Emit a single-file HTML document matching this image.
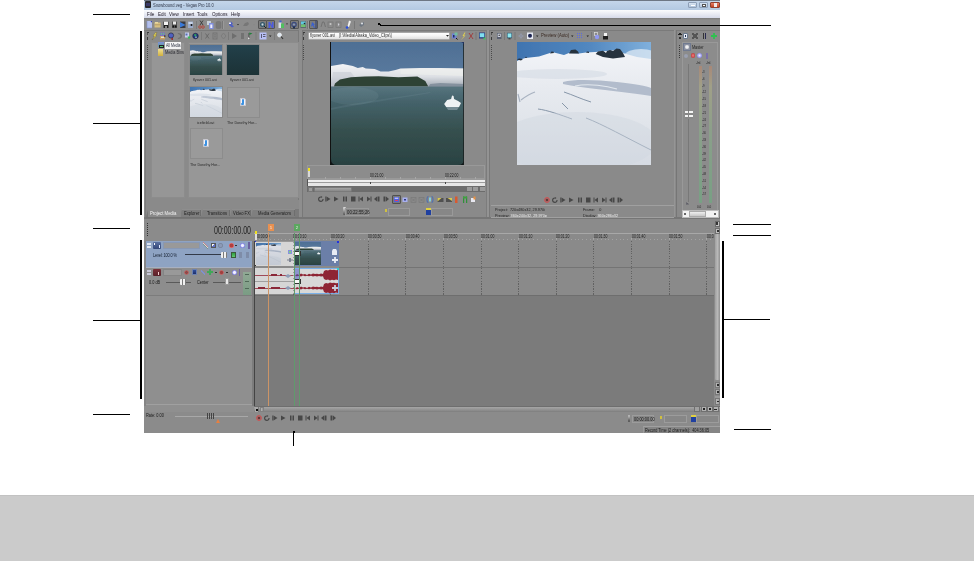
<!DOCTYPE html>
<html><head><meta charset="utf-8">
<style>
*{margin:0;padding:0;box-sizing:border-box}
html,body{width:974px;height:561px;overflow:hidden;background:#fff;font-family:"Liberation Sans",sans-serif}
.a{position:absolute}
#root{position:relative;width:974px;height:561px;background:#fff;overflow:hidden}
.ln{position:absolute;background:#000}
.t{position:absolute;white-space:nowrap;font-size:6px;line-height:7px;color:#222;transform:scaleX(0.86);transform-origin:0 0}
svg{display:block}
</style></head><body><div id="root">

<div class="a" style="left:0px;top:495px;width:974px;height:66px;background:#cbcbcb;"></div>
<div class="a" style="left:0px;top:495px;width:974px;height:1px;background:#c2c2c2;"></div>
<div class="a" style="left:144px;top:0px;width:576px;height:433px;background:#8a8a8a;"></div>
<div class="a" style="left:144px;top:0px;width:576px;height:1px;background:#6d7784;"></div>
<div class="a" style="left:144px;top:1px;width:576px;height:9px;background:linear-gradient(#c4d6ea,#b3c9e2);"></div>
<div class="a" style="left:145px;top:1px;width:6px;height:7px;background:#2a2a30;border-radius:1px"></div>
<div class="a" style="left:146px;top:3px;width:4px;height:3px;background:#3a3a6a;"></div>
<div class="t" style="left:153px;top:1px;font-size:5.5px;line-height:8px;color:#30384a;transform:scaleX(0.74);transform-origin:0 0">Snowbound.veg - Vegas Pro 10.0</div>
<div class="a" style="left:688px;top:2px;width:9px;height:6px;background:linear-gradient(#d8e4f2,#b0c4dc);border:1px solid #8ea0b8;border-radius:1px"></div>
<div class="a" style="left:691px;top:5px;width:4px;height:1px;background:#fff;"></div>
<div class="a" style="left:699px;top:2px;width:9px;height:6px;background:linear-gradient(#d8e4f2,#b0c4dc);border:1px solid #8ea0b8;border-radius:1px"></div>
<div class="a" style="left:702px;top:4px;width:4px;height:3px;background:#fff;border:1px solid #555"></div>
<div class="a" style="left:710px;top:2px;width:10px;height:6px;background:linear-gradient(#e8806a,#c04020);border:1px solid #904030;border-radius:1px"></div>
<div class="a" style="left:714px;top:3px;width:3px;height:4px;background:#f0e8e8;"></div>
<div class="a" style="left:144px;top:10px;width:576px;height:8px;background:linear-gradient(#fbfcfe,#f0f2f8 30%,#d6daea);"></div>
<div class="t" style="left:147px;top:11px;font-size:5.8px;line-height:7px;color:#1c1624;transform:scaleX(0.78);transform-origin:0 0">File</div>
<div class="t" style="left:158px;top:11px;font-size:5.8px;line-height:7px;color:#1c1624;transform:scaleX(0.78);transform-origin:0 0">Edit</div>
<div class="t" style="left:169px;top:11px;font-size:5.8px;line-height:7px;color:#1c1624;transform:scaleX(0.78);transform-origin:0 0">View</div>
<div class="t" style="left:183px;top:11px;font-size:5.8px;line-height:7px;color:#1c1624;transform:scaleX(0.78);transform-origin:0 0">Insert</div>
<div class="t" style="left:197px;top:11px;font-size:5.8px;line-height:7px;color:#1c1624;transform:scaleX(0.78);transform-origin:0 0">Tools</div>
<div class="t" style="left:212px;top:11px;font-size:5.8px;line-height:7px;color:#1c1624;transform:scaleX(0.78);transform-origin:0 0">Options</div>
<div class="t" style="left:231px;top:11px;font-size:5.8px;line-height:7px;color:#1c1624;transform:scaleX(0.78);transform-origin:0 0">Help</div>
<div class="a" style="left:144px;top:18px;width:576px;height:13px;background:linear-gradient(#7a7a7a,#8c8c8c 15%,#8c8c8c);"></div>
<svg class="a" style="left:146px;top:20px" width="50" height="9" viewBox="0 0 50 9">
<path d="M1 1 L4.5 1 L6 2.5 L6 8 L1 8Z" fill="#b4c0ec"/><path d="M4.5 1 L6 1 L6 2.5Z" fill="#3040c0"/><path d="M1 1 L1 8 L6 8" stroke="#8090d0" stroke-width="0.6" fill="none"/>
<rect x="8.5" y="2.5" width="6" height="5" fill="#d8c080"/><rect x="9" y="2" width="3" height="1.5" fill="#e8d8a0"/><rect x="8.5" y="4.5" width="6" height="0.7" fill="#a89060"/>
<rect x="17.5" y="1.5" width="5" height="6.5" rx="0.5" fill="#202020"/><rect x="18" y="1.5" width="4" height="3.5" fill="#f4f4f4"/><rect x="19.5" y="6" width="1" height="2" fill="#eee"/>
<rect x="26" y="1.5" width="5" height="6.5" rx="0.5" fill="#505050"/><rect x="27" y="1.5" width="3" height="3" fill="#e8e8e8"/><rect x="26.5" y="5.5" width="1.5" height="2" fill="#111"/><rect x="29" y="5.5" width="1.5" height="2" fill="#111"/>
<rect x="34" y="1.5" width="5.5" height="6.5" fill="#3a3a40"/><path d="M34 2 L39.5 5 L34 7.5Z" fill="#3a7ad8"/>
<rect x="42" y="1.5" width="5" height="6.5" fill="#9aaac8"/><rect x="42.5" y="2" width="4" height="2" fill="#c8d4e8"/><circle cx="45.5" cy="5" r="1" fill="#111"/>
</svg>
<div class="a" style="left:196px;top:21px;width:1px;height:8px;background:#7a7a7a;"></div>
<svg class="a" style="left:197px;top:19px" width="80" height="11" viewBox="0 0 80 11">
<path d="M3 1.5 L6 6 M6 1.5 L3 6" stroke="#3a3a3a" stroke-width="0.9"/><circle cx="3" cy="8" r="1.3" fill="none" stroke="#b04a40" stroke-width="1"/><circle cx="6" cy="8" r="1.3" fill="none" stroke="#b04a40" stroke-width="1"/>
<rect x="10" y="2" width="4" height="4" fill="#c8d0d8"/><rect x="12" y="4" width="4.5" height="6" fill="#8090e0"/><rect x="13.3" y="5.5" width="2" height="3.5" fill="#f0f0ff"/>
<rect x="19" y="2.5" width="5" height="7" rx="1.5" fill="#787878" stroke="#707070" stroke-width="0.5"/>
<rect x="26" y="2" width="1" height="8" fill="#9a9a9a"/><rect x="25" y="2" width="1" height="8" fill="#777"/>
<path d="M32 4 L34 2.5 L36 4.5 L35 5.5 L37 7.5 L35 8.5 L32 6Z" fill="#5060c0"/><rect x="32" y="3.5" width="2" height="1.5" fill="#e8e8f0"/>
<path d="M40 5 L42 5 L41 6.3Z" fill="#222"/>
<path d="M46 7 L48 4 L51 3 L52 5 L50 7Z" fill="#777"/>
<path d="M56 5 L58 5 L57 6.3Z" fill="#888"/>
</svg>
<div class="a" style="left:258px;top:20px;width:9px;height:9px;background:#7c7c7c;border:1px solid #555;border-radius:1px"></div>
<div class="a" style="left:266px;top:20px;width:9px;height:9px;background:#7c7c7c;border:1px solid #555;border-radius:1px"></div>
<svg class="a" style="left:259px;top:21px" width="16" height="8" viewBox="0 0 16 8">
<circle cx="3.5" cy="3.5" r="2" fill="none" stroke="#305a70" stroke-width="1.2"/><circle cx="3.5" cy="3.5" r="0.9" fill="#c0e0f0"/><path d="M5 5 L7 7" stroke="#222" stroke-width="1"/>
<path d="M9.5 1 L11 1 L13 4.5 L13 1 L14.5 1 L14.5 7 L13 7 L11 3.5 L11 7 L9.5 7Z" fill="#4a5ae0"/>
</svg>
<div class="a" style="left:290px;top:20px;width:9px;height:9px;background:#7c7c7c;border:1px solid #555;border-radius:1px"></div>
<div class="a" style="left:309px;top:20px;width:9px;height:9px;background:#7c7c7c;border:1px solid #555;border-radius:1px"></div>
<svg class="a" style="left:276px;top:19px" width="92" height="11" viewBox="0 0 92 11">
<rect x="3.5" y="1.5" width="2" height="2" fill="#4060d0"/><rect x="2.5" y="3.5" width="3" height="5.5" fill="#d8dce8"/><rect x="5" y="4.5" width="3" height="4.5" fill="#50c060"/>
<path d="M10 4.5 L12 4.5 L11 5.8Z" fill="#222"/>
<circle cx="18" cy="5.5" r="2.2" fill="none" stroke="#3a4a80" stroke-width="1.2"/><circle cx="18" cy="5.5" r="0.8" fill="#80a0e0"/><rect x="17" y="7.5" width="2" height="2" fill="#203050"/>
<rect x="24.5" y="2" width="5.5" height="7" fill="#5a6a70"/><rect x="25" y="2.5" width="4.5" height="3" fill="#60c8e0"/><rect x="25" y="5.5" width="4.5" height="2.5" fill="#70c070"/><circle cx="28.5" cy="4.5" r="0.8" fill="#222"/>
<rect x="31" y="2" width="1" height="8" fill="#777"/><rect x="32" y="2" width="1" height="8" fill="#9a9a9a"/>
<path d="M36 3 L39 5.5 L37.5 6 L39 8.5 L38 9 L36.5 6.5 L35 8Z" fill="#3a60d0"/><rect x="39.5" y="1.5" width="1" height="8" fill="#2a3a70"/>
<path d="M45 8 L46.5 3 L48 3 L49.5 8" stroke="#6e6e6e" stroke-width="0.9" fill="none"/>
<rect x="52" y="3" width="5" height="5.5" fill="none" stroke="#747474" stroke-width="0.7"/><circle cx="54.5" cy="5" r="1" fill="#c8c8c8"/>
<rect x="60" y="3" width="5" height="5.5" fill="none" stroke="#747474" stroke-width="0.7"/><path d="M62 4 L63.5 5.5 L62 7Z" fill="#d0d0d8"/>
<path d="M73 1.5 L75 2.5 L73 8 L71.5 7.5Z" fill="#f0f0f0"/><circle cx="71" cy="8.5" r="1.3" fill="#2a50e0"/>
<rect x="78" y="2" width="1" height="8" fill="#777"/>
<path d="M83 6 L86 4 L88 3 L88 6 L85 8Z" fill="#6e7680"/><circle cx="86" cy="4.5" r="1" fill="#e0e4ea"/>
</svg>
<div class="a" style="left:144px;top:30px;width:576px;height:189px;background:#8a8a8a;"></div>
<div class="a" style="left:144px;top:30px;width:576px;height:1px;background:#7a7a7a;"></div>
<div class="a" style="left:145px;top:30px;width:1px;height:188px;background:#7c7c7c;"></div>
<div class="a" style="left:298px;top:30px;width:5px;height:189px;background:linear-gradient(90deg,#7a7a7a 0 1px,#8e8e8e 1px 4px,#787878 4px);"></div>
<div class="a" style="left:486px;top:30px;width:4px;height:189px;background:linear-gradient(90deg,#7c7c7c 0 1px,#939393 1px 3px,#787878 3px);"></div>
<div class="a" style="left:674px;top:30px;width:3px;height:189px;background:linear-gradient(90deg,#959595 0 1px,#8a8a8a 1px 2px,#767676 2px);"></div>
<div class="a" style="left:144px;top:217px;width:576px;height:2px;background:#767676;"></div>
<div class="a" style="left:147px;top:32px;width:2px;height:1px;background:#3a3a3a;"></div>
<div class="a" style="left:147px;top:33px;width:1px;height:2px;background:#555;"></div>
<div class="a" style="left:147px;top:37px;width:1px;height:3px;background:#3a3a3a;"></div>
<div class="a" style="left:147px;top:45px;width:1px;height:1px;background:#4a4a4a;"></div>
<div class="a" style="left:147px;top:47px;width:1px;height:1px;background:#4a4a4a;"></div>
<div class="a" style="left:147px;top:49px;width:1px;height:1px;background:#4a4a4a;"></div>
<div class="a" style="left:147px;top:51px;width:1px;height:1px;background:#4a4a4a;"></div>
<div class="a" style="left:147px;top:53px;width:1px;height:1px;background:#4a4a4a;"></div>
<div class="a" style="left:147px;top:55px;width:1px;height:1px;background:#4a4a4a;"></div>
<div class="a" style="left:147px;top:57px;width:1px;height:1px;background:#4a4a4a;"></div>
<div class="a" style="left:147px;top:59px;width:1px;height:1px;background:#4a4a4a;"></div>
<svg class="a" style="left:150px;top:31px" width="50" height="10" viewBox="0 0 50 10">
<path d="M5.5 1.5 L3 5 L4.5 5 L2 9 L7 4.3 L5.5 4.3 L7 1.5Z" fill="#e8d850" stroke="#6a6040" stroke-width="0.4"/>
<rect x="10" y="1.5" width="5" height="3.5" fill="#7a70c0"/><rect x="10.8" y="2.3" width="1.2" height="1.2" fill="#60e070"/><rect x="13" y="2.3" width="1.2" height="1.2" fill="#60e070"/><rect x="10" y="5" width="5" height="3.5" fill="#c8a060"/><rect x="11" y="5.7" width="3" height="1.3" fill="#e0e0d0"/><rect x="14.2" y="4.5" width="1.2" height="1.2" fill="#111"/>
<circle cx="21" cy="4.5" r="2.6" fill="#5060c0" stroke="#2a2a40" stroke-width="0.7"/><rect x="21.5" y="7" width="1.3" height="2" fill="#a02020"/>
<path d="M27.5 2 Q32 2 32 5 Q32 8 27.5 8 L28.5 6.8 Q30.5 6.5 30.5 5 Q30.5 3.5 28.5 3.2Z" fill="#6e6e6e"/>
<rect x="35" y="1.5" width="4" height="5" fill="#c8d0f0"/><rect x="35.5" y="2.5" width="2" height="2" fill="#5a70b0"/><path d="M37.5 5.5 L40.5 5.5 L39 8.5Z" fill="#30c050"/>
<circle cx="45.5" cy="5" r="2.8" fill="#203a80" stroke="#1a1a30" stroke-width="0.5"/><path d="M44 3.5 Q45 2.5 46.5 3.5 L46 5.5 L44.5 5Z" fill="#30a060"/><rect x="45.5" y="5.5" width="1" height="1.5" fill="#e0e8f0"/>
</svg>
<svg class="a" style="left:200px;top:31px" width="88" height="10" viewBox="0 0 88 10">
<rect x="1" y="1" width="1" height="8" fill="#7a7a7a"/>
<path d="M5.5 2.5 L9 7.5 M9 2.5 L5.5 7.5" stroke="#6a6a6a" stroke-width="1"/>
<rect x="13" y="2" width="4" height="6" fill="none" stroke="#707070" stroke-width="0.8"/><rect x="14" y="3.5" width="2" height="0.8" fill="#707070"/><rect x="14" y="5.5" width="2" height="0.8" fill="#707070"/>
<path d="M23.5 2 L26 5 L23.5 8 L21 5Z" fill="none" stroke="#7a7a7a" stroke-width="0.9"/>
<rect x="28" y="1" width="1" height="8" fill="#7a7a7a"/>
<path d="M32 2 L37 5 L32 8Z" fill="#6e6e6e"/>
<rect x="41" y="2" width="3" height="6" fill="#727272"/>
<rect x="48.5" y="2" width="0.8" height="7" fill="#444"/><path d="M49.3 1.5 L52.5 2.5 L49.3 4Z" fill="#20803a"/><path d="M48 6 L50 8 L48 8.5Z" fill="#e0e0e0"/>
<rect x="55.5" y="1" width="1" height="8" fill="#7a7a7a"/>
<rect x="59.5" y="1.5" width="7" height="7" fill="#b8c0f8"/><rect x="61" y="3" width="1" height="4" fill="#5a5a70"/><rect x="63" y="3" width="2.5" height="1" fill="#5a5a70"/><rect x="63" y="5" width="2.5" height="1" fill="#5a5a70"/>
<path d="M69 4.5 L71.5 4.5 L70.25 6Z" fill="#222"/>
<rect x="74" y="1" width="1" height="8" fill="#7a7a7a"/>
<circle cx="79.5" cy="4" r="2" fill="#dde8f4" stroke="#f4f4f4" stroke-width="0.7"/><path d="M81 5.5 L83 7.8" stroke="#333" stroke-width="1.1"/>
</svg>
<div class="a" style="left:151px;top:42px;width:34px;height:156px;background:#969696;border:1px solid #8c8c8c"></div>
<div class="a" style="left:158px;top:42px;width:6px;height:5px;background:linear-gradient(#8090d8,#60a0a0);"></div>
<div class="a" style="left:159px;top:45px;width:5px;height:3px;background:#50c070;border:1px solid #222"></div>
<div class="a" style="left:165px;top:42px;width:16px;height:7px;background:#f4f4f4;"></div>
<div class="t" style="left:166px;top:43px;font-size:4.8px;line-height:6px;color:#2a3040;transform:scaleX(0.74);transform-origin:0 0">All Media</div>
<div class="a" style="left:158px;top:49px;width:5px;height:7px;background:linear-gradient(#f0e090,#d0b040);"></div>
<div class="t" style="left:165px;top:50px;font-size:4.8px;line-height:6px;color:#2a2a30;transform:scaleX(0.8);transform-origin:0 0">Media Bins</div>
<div class="a" style="left:188px;top:42px;width:111px;height:156px;background:#979797;border:1px solid #8c8c8c"></div>
<div class="a" style="left:189px;top:44px;width:34px;height:31px;background:#888"></div>
<svg class="a" style="left:190px;top:45px" width="32" height="30" viewBox="0 0 32 30"><defs><linearGradient id="skyth1" x1="0" y1="0" x2="0" y2="1"><stop offset="0" stop-color="#4e6f94"/><stop offset="1" stop-color="#7896b8"/></linearGradient>
<linearGradient id="watth1" x1="0" y1="0" x2="0" y2="1"><stop offset="0" stop-color="#56747e"/><stop offset="0.2" stop-color="#44626a"/><stop offset="0.55" stop-color="#36504f"/><stop offset="1" stop-color="#2a4242"/></linearGradient>
<linearGradient id="mtth1" x1="0" y1="0" x2="0" y2="1"><stop offset="0" stop-color="#f4f4f6"/><stop offset="0.55" stop-color="#dcdfe4"/><stop offset="1" stop-color="#a0a8b2"/></linearGradient></defs>
<filter id="wbth1" x="0" y="0" width="1" height="1"><feGaussianBlur stdDeviation="0.35"/></filter>
<g transform="scale(0.23880597014925373,0.24390243902439024)" filter="url(#wbth1)">
<rect width="134" height="123" fill="url(#skyth1)"/>
<path d="M0 24 L12 22 L22 24 L27 26 L32 25 L35 26.5 L44 27 L50 29.5 L58 29.5 L65 28 L70 26.5 L90 26 L110 26 L134 26.5 L134 45 L0 45Z" fill="url(#mtth1)"/>
<path d="M70 27 L134 26.5 L134 34 L70 32Z" fill="#eef0ec" opacity="0.6"/>
<path d="M2 30 L20 30 L26 38 L8 44 L0 44Z" fill="#c8ccd4" opacity="0.6"/>
<path d="M3 44.6 L4 41.5 L9 37.4 L20 35.3 L34 34.6 L48 34.2 L68 35.3 L87 34.6 L95 39 L98 44.6Z" fill="#2e4236"/>
<path d="M98 45 L100 42 L110 41 L134 42 L134 45Z" fill="#7a8896" opacity="0.8"/>
<rect y="44.6" width="134" height="78.4" fill="url(#watth1)"/>
<ellipse cx="22" cy="54" rx="26" ry="9" fill="#90aab4" opacity="0.12"/>
<path d="M0 66 C30 60 60 56 100 50 L100 51 C60 58 30 62 0 68Z" fill="#88a4ae" opacity="0.15"/>
<path d="M114 62 L117 58 L121 57 L122 53.5 L123.5 54 L124 57 L128 59 L131 61 L129 65 L116 65Z" fill="#eef2f4"/>
<path d="M116 65 L129 65 L127 68 L118 68Z" fill="#8aa0a8" opacity="0.7"/>
</g></svg>
<div class="a" style="left:226px;top:44px;width:34px;height:31px;background:#888"></div>
<div class="a" style="left:227px;top:45px;width:32px;height:30px;background:linear-gradient(#22404a,#1c3236)"></div>
<div class="a" style="left:189px;top:86px;width:34px;height:32px;background:#888"></div>
<svg class="a" style="left:190px;top:87px" width="32" height="30" viewBox="0 0 32 30"><defs><linearGradient id="sskyth3" x1="0" y1="0" x2="1" y2="0"><stop offset="0" stop-color="#4074b0"/><stop offset="0.55" stop-color="#5288c0"/><stop offset="1" stop-color="#80b0dc"/></linearGradient>
<linearGradient id="snowth3" x1="0" y1="0" x2="0" y2="1"><stop offset="0" stop-color="#f2f4f8"/><stop offset="0.3" stop-color="#e8ebf0"/><stop offset="0.65" stop-color="#e0e4ea"/><stop offset="1" stop-color="#d6dbe3"/></linearGradient></defs>
<filter id="sbth3" x="0" y="0" width="1" height="1"><feGaussianBlur stdDeviation="0.45"/></filter>
<g transform="scale(0.23880597014925373,0.24390243902439024)" filter="url(#sbth3)">
<rect width="134" height="123" fill="url(#sskyth3)"/>
<ellipse cx="124" cy="13" rx="16" ry="6" fill="#e8f0f6" opacity="0.7"/>
<path d="M0 19 L3 17.4 L8.5 16 L22 14.5 L33 11 L36 10.2 L47 13 L52 11 L62 11.5 L69 10.5 L78 10 L90 9 L99 8 L106 11 L111 12.5 L120 15 L134 17 L134 123 L0 123Z" fill="url(#snowth3)"/>
<path d="M0 17.5 L2 16.5 L6 17 L4 18.5Z M8 16 L9 14.6 L10 16Z M33 11.5 L34.5 9.5 L36.5 9.8 L37 11Z M52 11.5 L54 8 L58.5 7.5 L61 9.5 L62 11.5Z M69 10.5 L70 9.5 L72 9.8 L72 11Z M78.7 12 L81 9.5 L86 8.8 L89 11 L90 9 L93 8 L96 9 L99.5 6.6 L103 7 L106 11 L108 15 L96 16.5 L86 15Z" fill="#27313c"/>
<ellipse cx="40" cy="32" rx="50" ry="5" fill="#d0d8e2" opacity="0.5"/>
<path d="M46 40 C58 37 80 38 100 40 C118 42 130 44 134 46 L134 54 C122 52 104 50 88 48 C70 46 55 44 46 42Z" fill="#b2bccc"/>
<path d="M58 44 C72 41 90 44 100 47" stroke="#eef2f6" stroke-width="1.2" fill="none" opacity="0.8"/>
<path d="M1 52 L3 60 M4 58 C8 55 12 52 18 50" stroke="#a8b2c0" stroke-width="1.2" fill="none"/>
<path d="M21 67 C30 68 44 73 55 77 M45 61 C47 63 49 65 51 67 M69 76 C85 82 110 96 134 108 M47 50 C56 53 64 57 74 60" stroke="#7c8ca0" stroke-width="0.9" fill="none"/>
<ellipse cx="60" cy="100" rx="80" ry="30" fill="#d0d6e0" opacity="0.45"/>
</g></svg>
<div class="a" style="left:227px;top:87px;width:33px;height:31px;background:#9a9a9a;border:1px solid #8c8c8c"></div>
<div class="a" style="left:190px;top:128px;width:33px;height:31px;background:#9a9a9a;border:1px solid #8c8c8c"></div>
<div class="a" style="left:240px;top:98px;width:6px;height:8px;background:#f4f4f8;border:1px solid #c8c8d0;border-radius:0 2px 0 0"></div><div class="a" style="left:242px;top:99px;width:2px;height:5px;background:#3a90e0;border-radius:1px"></div><div class="a" style="left:241px;top:103px;width:3px;height:2px;background:#3a90e0;border-radius:1px"></div>
<div class="a" style="left:203px;top:139px;width:6px;height:8px;background:#f4f4f8;border:1px solid #c8c8d0;border-radius:0 2px 0 0"></div><div class="a" style="left:205px;top:140px;width:2px;height:5px;background:#3a90e0;border-radius:1px"></div><div class="a" style="left:204px;top:144px;width:3px;height:2px;background:#3a90e0;border-radius:1px"></div>
<div class="t" style="left:193px;top:77px;font-size:4.3px;line-height:6px;color:#2a2a2a">flyover 001.avi</div>
<div class="t" style="left:230px;top:77px;font-size:4.3px;line-height:6px;color:#2a2a2a">flyover 001.avi</div>
<div class="t" style="left:197px;top:120px;font-size:4.3px;line-height:6px;color:#2a2a2a">icefield.avi</div>
<div class="t" style="left:227px;top:120px;font-size:4.3px;line-height:6px;color:#2a2a2a">The Dorothy Hor...</div>
<div class="t" style="left:190px;top:162px;font-size:4.3px;line-height:6px;color:#2a2a2a">The Dorothy Hor...</div>
<div class="a" style="left:146px;top:200px;width:153px;height:17px;background:#8a8a8a;"></div>
<div class="a" style="left:146px;top:216px;width:153px;height:2px;background:#727272;"></div>
<div class="a" style="left:295px;top:209px;width:4px;height:8px;background:#7a7a7a;"></div>
<div class="a" style="left:180px;top:209px;width:21px;height:8px;background:#7f7f7f;clip-path:polygon(2px 0,100% 0,100% 100%,0 100%);border-top:1px solid #8e8e8e"></div>
<div class="a" style="left:200px;top:210px;width:1px;height:6px;background:#6e6e6e;"></div>
<div class="a" style="left:201px;top:209px;width:29px;height:8px;background:#7f7f7f;clip-path:polygon(2px 0,100% 0,100% 100%,0 100%);border-top:1px solid #8e8e8e"></div>
<div class="a" style="left:229px;top:210px;width:1px;height:6px;background:#6e6e6e;"></div>
<div class="a" style="left:230px;top:209px;width:21px;height:8px;background:#7f7f7f;clip-path:polygon(2px 0,100% 0,100% 100%,0 100%);border-top:1px solid #8e8e8e"></div>
<div class="a" style="left:250px;top:210px;width:1px;height:6px;background:#6e6e6e;"></div>
<div class="a" style="left:251px;top:209px;width:44px;height:8px;background:#7f7f7f;clip-path:polygon(2px 0,100% 0,100% 100%,0 100%);border-top:1px solid #8e8e8e"></div>
<div class="a" style="left:294px;top:210px;width:1px;height:6px;background:#6e6e6e;"></div>
<div class="a" style="left:146px;top:209px;width:35px;height:8px;background:#8a8a8a;clip-path:polygon(3px 0,100% 0,100% 100%,0 100%)"></div>
<div class="a" style="left:146px;top:210px;width:2px;height:7px;background:#767676;clip-path:polygon(100% 0,100% 100%,0 100%)"></div>
<div class="t" style="left:150px;top:210px;font-size:5px;line-height:7px;color:#f4f4f4;">Project Media</div>
<div class="t" style="left:184px;top:210px;font-size:4.8px;line-height:7px;color:#1e1e1e;">Explorer</div>
<div class="t" style="left:207px;top:210px;font-size:4.8px;line-height:7px;color:#1e1e1e;">Transitions</div>
<div class="t" style="left:233px;top:210px;font-size:4.8px;line-height:7px;color:#1e1e1e;">Video FX</div>
<div class="t" style="left:258px;top:210px;font-size:4.8px;line-height:7px;color:#1e1e1e;">Media Generators</div>
<div class="a" style="left:303px;top:32px;width:2px;height:1px;background:#3a3a3a;"></div>
<div class="a" style="left:303px;top:33px;width:1px;height:2px;background:#555;"></div>
<div class="a" style="left:303px;top:37px;width:1px;height:3px;background:#3a3a3a;"></div>
<div class="a" style="left:303px;top:45px;width:1px;height:1px;background:#4a4a4a;"></div>
<div class="a" style="left:303px;top:47px;width:1px;height:1px;background:#4a4a4a;"></div>
<div class="a" style="left:303px;top:49px;width:1px;height:1px;background:#4a4a4a;"></div>
<div class="a" style="left:303px;top:51px;width:1px;height:1px;background:#4a4a4a;"></div>
<div class="a" style="left:303px;top:53px;width:1px;height:1px;background:#4a4a4a;"></div>
<div class="a" style="left:303px;top:55px;width:1px;height:1px;background:#4a4a4a;"></div>
<div class="a" style="left:303px;top:57px;width:1px;height:1px;background:#4a4a4a;"></div>
<div class="a" style="left:303px;top:59px;width:1px;height:1px;background:#4a4a4a;"></div>
<div class="a" style="left:308px;top:32px;width:142px;height:8px;background:linear-gradient(#ffffff,#f4f4f4 50%,#e0e0e0);border:1px solid #a8a8a8;border-radius:1px"></div>
<div class="t" style="left:310px;top:32px;font-size:4.5px;line-height:7px;color:#2a2a2a;">flyover 001.avi &nbsp;&nbsp;&nbsp;[I:\Media\Alaska_Video_Clips\]</div>
<svg class="a" style="left:444px;top:31px" width="44" height="10" viewBox="0 0 44 10">
<path d="M2 4 L5 4 L3.5 5.8Z" fill="#222"/>
<rect x="8" y="2.5" width="4.5" height="5" fill="#7080d8"/><rect x="10.5" y="1.5" width="3" height="3" fill="#70c0a0"/><rect x="9" y="4" width="1.5" height="2.5" fill="#20305a"/><path d="M12 7 L13.5 8.5" stroke="#111" stroke-width="1"/>
<path d="M20.5 1.5 L18.5 5 L20 5 L17 9 L21.5 4.5 L20 4.5 L21.5 1.5Z" fill="#e0d050"/>
<path d="M25 2 L29 8 M29 2 L25 8" stroke="#a03838" stroke-width="0.9"/>
<rect x="31.5" y="1" width="1" height="8" fill="#777"/>
<rect x="35" y="1.5" width="6" height="6" fill="#2a3a80"/><rect x="35.7" y="2.2" width="4.6" height="4" fill="#80e0f0"/><rect x="39.5" y="6.5" width="2" height="2" fill="#40c060"/>
</svg>
<div class="a" style="left:330px;top:42px;width:1px;height:123px;background:#111"></div>
<svg class="a" style="left:331px;top:42px" width="133" height="123" viewBox="0 0 133 123"><defs><linearGradient id="skyt" x1="0" y1="0" x2="0" y2="1"><stop offset="0" stop-color="#4e6f94"/><stop offset="1" stop-color="#7896b8"/></linearGradient>
<linearGradient id="watt" x1="0" y1="0" x2="0" y2="1"><stop offset="0" stop-color="#56747e"/><stop offset="0.2" stop-color="#44626a"/><stop offset="0.55" stop-color="#36504f"/><stop offset="1" stop-color="#2a4242"/></linearGradient>
<linearGradient id="mtt" x1="0" y1="0" x2="0" y2="1"><stop offset="0" stop-color="#f4f4f6"/><stop offset="0.55" stop-color="#dcdfe4"/><stop offset="1" stop-color="#a0a8b2"/></linearGradient></defs>
<filter id="wbt" x="0" y="0" width="1" height="1"><feGaussianBlur stdDeviation="0.35"/></filter>
<g transform="scale(0.9925373134328358,1.0)" filter="url(#wbt)">
<rect width="134" height="123" fill="url(#skyt)"/>
<path d="M0 24 L12 22 L22 24 L27 26 L32 25 L35 26.5 L44 27 L50 29.5 L58 29.5 L65 28 L70 26.5 L90 26 L110 26 L134 26.5 L134 45 L0 45Z" fill="url(#mtt)"/>
<path d="M70 27 L134 26.5 L134 34 L70 32Z" fill="#eef0ec" opacity="0.6"/>
<path d="M2 30 L20 30 L26 38 L8 44 L0 44Z" fill="#c8ccd4" opacity="0.6"/>
<path d="M3 44.6 L4 41.5 L9 37.4 L20 35.3 L34 34.6 L48 34.2 L68 35.3 L87 34.6 L95 39 L98 44.6Z" fill="#2e4236"/>
<path d="M98 45 L100 42 L110 41 L134 42 L134 45Z" fill="#7a8896" opacity="0.8"/>
<rect y="44.6" width="134" height="78.4" fill="url(#watt)"/>
<ellipse cx="22" cy="54" rx="26" ry="9" fill="#90aab4" opacity="0.12"/>
<path d="M0 66 C30 60 60 56 100 50 L100 51 C60 58 30 62 0 68Z" fill="#88a4ae" opacity="0.15"/>
<path d="M114 62 L117 58 L121 57 L122 53.5 L123.5 54 L124 57 L128 59 L131 61 L129 65 L116 65Z" fill="#eef2f4"/>
<path d="M116 65 L129 65 L127 68 L118 68Z" fill="#8aa0a8" opacity="0.7"/>
<path d="M0 117 Q0 123 6 123 L0 123Z M134 117 Q134 123 128 123 L134 123Z" fill="#101418"/><rect x="133" width="1" height="123" fill="#1a2020" opacity="0.8"/><path d="M134 0 L130 0 Q134 0 134 4Z" fill="#203060"/></g></svg>
<div class="a" style="left:307px;top:165px;width:178px;height:14px;background:#8c8c8c;border:1px solid #999"></div>
<div class="a" style="left:308px;top:168px;width:2px;height:3px;background:#f0e020;"></div>
<div class="a" style="left:308px;top:171px;width:2px;height:6px;background:#d8d8d8;"></div>
<div class="t" style="left:370px;top:173px;font-size:4.6px;line-height:5px;color:#222;transform:scaleX(0.75);transform-origin:0 0">00:21:00</div>
<div class="t" style="left:445px;top:173px;font-size:4.6px;line-height:5px;color:#222;transform:scaleX(0.75);transform-origin:0 0">00:22:00</div>
<div class="a" style="left:325px;top:177px;width:1px;height:2px;background:#a8a8a8;"></div>
<div class="a" style="left:340px;top:177px;width:1px;height:2px;background:#a8a8a8;"></div>
<div class="a" style="left:355px;top:177px;width:1px;height:2px;background:#a8a8a8;"></div>
<div class="a" style="left:370px;top:177px;width:1px;height:2px;background:#a8a8a8;"></div>
<div class="a" style="left:385px;top:177px;width:1px;height:2px;background:#a8a8a8;"></div>
<div class="a" style="left:400px;top:177px;width:1px;height:2px;background:#a8a8a8;"></div>
<div class="a" style="left:415px;top:177px;width:1px;height:2px;background:#a8a8a8;"></div>
<div class="a" style="left:430px;top:177px;width:1px;height:2px;background:#a8a8a8;"></div>
<div class="a" style="left:445px;top:177px;width:1px;height:2px;background:#a8a8a8;"></div>
<div class="a" style="left:460px;top:177px;width:1px;height:2px;background:#a8a8a8;"></div>
<div class="a" style="left:475px;top:177px;width:1px;height:2px;background:#a8a8a8;"></div>
<div class="a" style="left:307px;top:179px;width:178px;height:7px;background:linear-gradient(#9a9a9a 0 0.5px,#eeeeee 0.5px 3px,#9c9c9c 3px 4px,#e6e6e6 4px 6.5px,#9a9a9a 6.5px);border-left:1px solid #555"></div>
<div class="a" style="left:370px;top:182px;width:1px;height:2px;background:#444;"></div>
<div class="a" style="left:445px;top:182px;width:1px;height:2px;background:#444;"></div>
<div class="a" style="left:307px;top:186px;width:178px;height:6px;background:#6c6c6c;"></div>
<div class="a" style="left:308px;top:187px;width:5px;height:5px;background:#9a9a9a;border:1px solid #777"></div>
<div class="a" style="left:314px;top:187px;width:38px;height:5px;background:linear-gradient(#a4a4a4,#888);border:1px solid #7a7a7a;border-radius:1px"></div>
<div class="a" style="left:467px;top:187px;width:5px;height:4px;background:#9a9a9a;"></div>
<div class="a" style="left:473px;top:187px;width:5px;height:4px;background:#9a9a9a;"></div>
<div class="a" style="left:480px;top:187px;width:5px;height:4px;background:#9a9a9a;"></div>
<svg class="a" style="left:318px;top:196px" width="6" height="6" viewBox="0 0 6 6"><path d="M3 1 A2.2 2.2 0 1 0 5 3" stroke="#474747" stroke-width="1.2" fill="none"/><path d="M3 0 L4.5 1 L3 2Z" fill="#474747"/></svg>
<svg class="a" style="left:325px;top:196px" width="6" height="6" viewBox="0 0 6 6"><rect x="0.3" y="0.5" width="1" height="5" fill="#474747"/><path d="M1.5 0.5 L5.5 3 L1.5 5.5Z" fill="#474747"/></svg>
<svg class="a" style="left:333px;top:196px" width="6" height="6" viewBox="0 0 6 6"><path d="M1 0.5 L5.5 3 L1 5.5Z" fill="#474747"/></svg>
<svg class="a" style="left:342px;top:196px" width="6" height="6" viewBox="0 0 6 6"><rect x="1" y="0.5" width="1.5" height="5" fill="#474747"/><rect x="3.5" y="0.5" width="1.5" height="5" fill="#474747"/></svg>
<svg class="a" style="left:350px;top:196px" width="6" height="6" viewBox="0 0 6 6"><rect x="1" y="0.5" width="4.5" height="5" fill="#474747"/></svg>
<svg class="a" style="left:358px;top:196px" width="6" height="6" viewBox="0 0 6 6"><rect x="0.5" y="0.5" width="1" height="5" fill="#474747"/><path d="M5 0.5 L1.5 3 L5 5.5Z" fill="#474747"/></svg>
<svg class="a" style="left:366px;top:196px" width="6" height="6" viewBox="0 0 6 6"><path d="M1 0.5 L4.5 3 L1 5.5Z" fill="#474747"/><rect x="4.5" y="0.5" width="1" height="5" fill="#474747"/></svg>
<svg class="a" style="left:374px;top:196px" width="6" height="6" viewBox="0 0 6 6"><path d="M3 0.5 L0 3 L3 5.5Z" fill="#474747"/><rect x="3.5" y="0.5" width="2" height="5" fill="#474747"/></svg>
<svg class="a" style="left:383px;top:196px" width="6" height="6" viewBox="0 0 6 6"><rect x="0.5" y="0.5" width="2" height="5" fill="#474747"/><path d="M3 0.5 L6 3 L3 5.5Z" fill="#474747"/></svg>
<div class="a" style="left:392px;top:195px;width:9px;height:9px;background:#7a7a7a;border:1px solid #505050;border-radius:1px"></div>
<svg class="a" style="left:392px;top:195px" width="86" height="9" viewBox="0 0 86 9">
<rect x="2" y="2" width="5" height="5" fill="#5060e0"/><rect x="2.7" y="2.7" width="3.6" height="1" fill="#e8e8ff"/><rect x="3" y="5" width="3" height="1" fill="#e04060"/>
<rect x="10.5" y="2.5" width="5" height="4.5" fill="#a8b0f0"/><rect x="12" y="4" width="2" height="1.5" fill="#303a80"/>
<rect x="19" y="2.5" width="5" height="5" fill="none" stroke="#7a7a7a" stroke-width="0.7"/><path d="M20 3.5 L23 6.5 M23 3.5 L20 6.5" stroke="#747474" stroke-width="0.6"/>
<rect x="27" y="2.5" width="5" height="5" fill="none" stroke="#7a7a7a" stroke-width="0.7"/><path d="M28 3.5 L31 6.5 M31 3.5 L28 6.5" stroke="#747474" stroke-width="0.6"/>
<path d="M36.5 1.5 Q35 1.5 35 4.5 Q35 7.5 36.5 7.5 M39.5 1.5 Q41 1.5 41 4.5 Q41 7.5 39.5 7.5" stroke="#5070b0" stroke-width="1.1" fill="none"/><rect x="37" y="2.5" width="2" height="4" fill="#80d0e0"/>
<path d="M45.5 3 L51.5 3 L51.5 7 L45.5 7Z" fill="#505050"/><path d="M45.5 3 L49.5 3 L45.5 6.5Z" fill="#d8c850"/>
<path d="M54 3 L60 3 L60 7 L54 7Z" fill="#505050"/><path d="M55.5 3 L60 3 L60 6Z" fill="#d8c850"/>
<rect x="63" y="1.5" width="2.5" height="6.5" fill="#d85a30"/>
<rect x="71" y="1.5" width="1.2" height="6.5" fill="#30903a"/><rect x="74" y="1.5" width="1.2" height="6.5" fill="#30903a"/><rect x="71" y="1.5" width="4" height="2" fill="#40a040"/>
<rect x="79" y="3" width="4" height="4" fill="#e8e8f0"/><rect x="81.5" y="1.5" width="2" height="3" fill="#e89040"/>
</svg>
<div class="a" style="left:343px;top:207px;width:3px;height:8px;background:linear-gradient(#ddd,#555);border-radius:1px"></div>
<div class="a" style="left:345px;top:208px;width:24px;height:8px;background:#858585;border:1px solid #9a9a9a"></div>
<div class="t" style="left:347px;top:209px;font-size:5px;line-height:7px;color:#1a1a1a;">00:22:55;26</div>
<div class="a" style="left:385px;top:209px;width:2px;height:3px;background:#d0c040;"></div>
<div class="a" style="left:388px;top:208px;width:22px;height:8px;background:#878787;border:1px solid #9a9a9a"></div>
<div class="a" style="left:426px;top:208px;width:5px;height:7px;background:linear-gradient(#e0d040 30%,#2040a0 30%);"></div>
<div class="a" style="left:431px;top:208px;width:22px;height:8px;background:#878787;border:1px solid #9a9a9a"></div>
<div class="a" style="left:491px;top:32px;width:2px;height:1px;background:#3a3a3a;"></div>
<div class="a" style="left:491px;top:33px;width:1px;height:2px;background:#555;"></div>
<div class="a" style="left:491px;top:37px;width:1px;height:3px;background:#3a3a3a;"></div>
<div class="a" style="left:491px;top:45px;width:1px;height:1px;background:#4a4a4a;"></div>
<div class="a" style="left:491px;top:47px;width:1px;height:1px;background:#4a4a4a;"></div>
<div class="a" style="left:491px;top:49px;width:1px;height:1px;background:#4a4a4a;"></div>
<div class="a" style="left:491px;top:51px;width:1px;height:1px;background:#4a4a4a;"></div>
<div class="a" style="left:491px;top:53px;width:1px;height:1px;background:#4a4a4a;"></div>
<div class="a" style="left:491px;top:55px;width:1px;height:1px;background:#4a4a4a;"></div>
<div class="a" style="left:491px;top:57px;width:1px;height:1px;background:#4a4a4a;"></div>
<div class="a" style="left:491px;top:59px;width:1px;height:1px;background:#4a4a4a;"></div>
<svg class="a" style="left:494px;top:31px" width="120" height="10" viewBox="0 0 120 10">
<rect x="3" y="2" width="4.5" height="6" fill="#5a6070"/><rect x="3.7" y="2.7" width="3" height="3.2" fill="#d8dce8"/><circle cx="5.2" cy="4.3" r="0.8" fill="#333"/>
<rect x="10" y="1" width="1" height="8" fill="#777"/>
<rect x="13" y="1.8" width="5" height="5.5" fill="#3a5a70"/><rect x="13.6" y="2.4" width="3.8" height="4" fill="#90e8f0"/><rect x="14.5" y="7.3" width="2" height="1" fill="#333"/>
<rect x="20.5" y="1" width="1" height="8" fill="#777"/>
<path d="M24 5 L30 5 M27 2 L27 8" stroke="#8e96a8" stroke-width="0.8"/><circle cx="27" cy="5" r="1.5" fill="none" stroke="#9aa0b0" stroke-width="0.6"/>
<rect x="33" y="1.5" width="6" height="6.5" fill="#e8ecf4"/><circle cx="36" cy="4.8" r="2" fill="#1a2250"/>
<path d="M42 4.5 L44.5 4.5 L43.25 6Z" fill="#222"/>
<path d="M77 4.5 L79.5 4.5 L78.25 6Z" fill="#222"/>
<g fill="#5a6ae0"><rect x="83" y="2" width="1" height="1"/><rect x="85" y="2" width="1" height="1"/><rect x="87" y="2" width="1" height="1"/><rect x="83" y="4" width="1" height="1"/><rect x="85" y="4" width="1" height="1"/><rect x="87" y="4" width="1" height="1"/><rect x="83" y="6" width="1" height="1"/><rect x="85" y="6" width="1" height="1"/><rect x="87" y="6" width="1" height="1"/></g>
<path d="M92.5 4.5 L95 4.5 L93.75 6Z" fill="#222"/>
<rect x="97" y="1" width="1" height="8" fill="#777"/>
<rect x="100.5" y="1.5" width="3" height="3" fill="none" stroke="#e0e0e0" stroke-width="0.7"/><circle cx="103" cy="6" r="2.2" fill="#9098f0"/>
<rect x="109" y="2" width="5" height="6.5" fill="#202020"/><rect x="109.5" y="2" width="4" height="3" fill="#f4f4f4"/>
</svg>
<div class="t" style="left:541px;top:32px;font-size:5px;line-height:7px;color:#3a2a22;">Preview (Auto)</div>
<svg class="a" style="left:517px;top:42px" width="134" height="123" viewBox="0 0 134 123"><defs><linearGradient id="sskyp" x1="0" y1="0" x2="1" y2="0"><stop offset="0" stop-color="#4074b0"/><stop offset="0.55" stop-color="#5288c0"/><stop offset="1" stop-color="#80b0dc"/></linearGradient>
<linearGradient id="snowp" x1="0" y1="0" x2="0" y2="1"><stop offset="0" stop-color="#f2f4f8"/><stop offset="0.3" stop-color="#e8ebf0"/><stop offset="0.65" stop-color="#e0e4ea"/><stop offset="1" stop-color="#d6dbe3"/></linearGradient></defs>
<filter id="sbp" x="0" y="0" width="1" height="1"><feGaussianBlur stdDeviation="0.45"/></filter>
<g transform="scale(1.0,1.0)" filter="url(#sbp)">
<rect width="134" height="123" fill="url(#sskyp)"/>
<ellipse cx="124" cy="13" rx="16" ry="6" fill="#e8f0f6" opacity="0.7"/>
<path d="M0 19 L3 17.4 L8.5 16 L22 14.5 L33 11 L36 10.2 L47 13 L52 11 L62 11.5 L69 10.5 L78 10 L90 9 L99 8 L106 11 L111 12.5 L120 15 L134 17 L134 123 L0 123Z" fill="url(#snowp)"/>
<path d="M0 17.5 L2 16.5 L6 17 L4 18.5Z M8 16 L9 14.6 L10 16Z M33 11.5 L34.5 9.5 L36.5 9.8 L37 11Z M52 11.5 L54 8 L58.5 7.5 L61 9.5 L62 11.5Z M69 10.5 L70 9.5 L72 9.8 L72 11Z M78.7 12 L81 9.5 L86 8.8 L89 11 L90 9 L93 8 L96 9 L99.5 6.6 L103 7 L106 11 L108 15 L96 16.5 L86 15Z" fill="#27313c"/>
<ellipse cx="40" cy="32" rx="50" ry="5" fill="#d0d8e2" opacity="0.5"/>
<path d="M46 40 C58 37 80 38 100 40 C118 42 130 44 134 46 L134 54 C122 52 104 50 88 48 C70 46 55 44 46 42Z" fill="#b2bccc"/>
<path d="M58 44 C72 41 90 44 100 47" stroke="#eef2f6" stroke-width="1.2" fill="none" opacity="0.8"/>
<path d="M1 52 L3 60 M4 58 C8 55 12 52 18 50" stroke="#a8b2c0" stroke-width="1.2" fill="none"/>
<path d="M21 67 C30 68 44 73 55 77 M45 61 C47 63 49 65 51 67 M69 76 C85 82 110 96 134 108 M47 50 C56 53 64 57 74 60" stroke="#7c8ca0" stroke-width="0.9" fill="none"/>
<ellipse cx="60" cy="100" rx="80" ry="30" fill="#d0d6e0" opacity="0.45"/>
</g></svg>
<svg class="a" style="left:544px;top:197px" width="6" height="6" viewBox="0 0 6 6"><circle cx="3" cy="3" r="2.4" fill="#8a7070" stroke="#e04848" stroke-width="0.9"/><circle cx="3" cy="3" r="1.1" fill="#602828"/></svg>
<svg class="a" style="left:552px;top:197px" width="6" height="6" viewBox="0 0 6 6"><path d="M3 1 A2.2 2.2 0 1 0 5 3" stroke="#474747" stroke-width="1.2" fill="none"/><path d="M3 0 L4.5 1 L3 2Z" fill="#474747"/></svg>
<svg class="a" style="left:560px;top:197px" width="6" height="6" viewBox="0 0 6 6"><rect x="0.3" y="0.5" width="1" height="5" fill="#474747"/><path d="M1.5 0.5 L5.5 3 L1.5 5.5Z" fill="#474747"/></svg>
<svg class="a" style="left:568px;top:197px" width="6" height="6" viewBox="0 0 6 6"><path d="M1 0.5 L5.5 3 L1 5.5Z" fill="#474747"/></svg>
<svg class="a" style="left:577px;top:197px" width="6" height="6" viewBox="0 0 6 6"><rect x="1" y="0.5" width="1.5" height="5" fill="#474747"/><rect x="3.5" y="0.5" width="1.5" height="5" fill="#474747"/></svg>
<svg class="a" style="left:585px;top:197px" width="6" height="6" viewBox="0 0 6 6"><rect x="1" y="0.5" width="4.5" height="5" fill="#474747"/></svg>
<svg class="a" style="left:593px;top:197px" width="6" height="6" viewBox="0 0 6 6"><rect x="0.5" y="0.5" width="1" height="5" fill="#474747"/><path d="M5 0.5 L1.5 3 L5 5.5Z" fill="#474747"/></svg>
<svg class="a" style="left:601px;top:197px" width="6" height="6" viewBox="0 0 6 6"><path d="M1 0.5 L4.5 3 L1 5.5Z" fill="#474747"/><rect x="4.5" y="0.5" width="1" height="5" fill="#474747"/></svg>
<svg class="a" style="left:609px;top:197px" width="6" height="6" viewBox="0 0 6 6"><path d="M3 0.5 L0 3 L3 5.5Z" fill="#474747"/><rect x="3.5" y="0.5" width="2" height="5" fill="#474747"/></svg>
<svg class="a" style="left:617px;top:197px" width="6" height="6" viewBox="0 0 6 6"><rect x="0.5" y="0.5" width="2" height="5" fill="#474747"/><path d="M3 0.5 L6 3 L3 5.5Z" fill="#474747"/></svg>
<div class="a" style="left:491px;top:205px;width:183px;height:1px;background:#a0a0a0;"></div>
<div class="t" style="left:495px;top:207px;font-size:4.4px;line-height:5px;color:#1e1e1e;">Project:&nbsp; 720x480x32, 29.970i</div>
<div class="t" style="left:495px;top:212.5px;font-size:4.4px;line-height:5px;color:#1e1e1e;">Preview: <span style="color:#f0f0f0">360x240x32, 29.970p</span></div>
<div class="t" style="left:583px;top:207px;font-size:4.4px;line-height:5px;color:#1e1e1e;">Frame:&nbsp;&nbsp;&nbsp; 0</div>
<div class="t" style="left:583px;top:212.5px;font-size:4.4px;line-height:5px;color:#1e1e1e;">Display: <span style="color:#f0f0f0">360x286x32</span></div>
<div class="a" style="left:491px;top:217px;width:183px;height:1px;background:#a0a0a0;"></div>
<div class="a" style="left:679px;top:33px;width:2px;height:1px;background:#222;"></div>
<div class="a" style="left:678px;top:34px;width:4px;height:1px;background:#222;"></div>
<div class="a" style="left:679px;top:37px;width:2px;height:2px;background:#333;"></div>
<div class="a" style="left:679px;top:45px;width:1px;height:1px;background:#3a3a3a;"></div>
<div class="a" style="left:679px;top:47px;width:1px;height:1px;background:#3a3a3a;"></div>
<div class="a" style="left:679px;top:49px;width:1px;height:1px;background:#3a3a3a;"></div>
<div class="a" style="left:679px;top:51px;width:1px;height:1px;background:#3a3a3a;"></div>
<div class="a" style="left:679px;top:53px;width:1px;height:1px;background:#3a3a3a;"></div>
<div class="a" style="left:679px;top:55px;width:1px;height:1px;background:#3a3a3a;"></div>
<div class="a" style="left:679px;top:57px;width:1px;height:1px;background:#3a3a3a;"></div>
<div class="a" style="left:683px;top:33px;width:5px;height:6px;background:radial-gradient(#203050 35%,#e8ecf4 40%);border:1px solid #6a7a90;border-radius:1px"></div>
<div class="a" style="left:692px;top:33px;width:6px;height:6px;background:linear-gradient(45deg,transparent 40%,#555 40%,#555 60%,transparent 60%),linear-gradient(-45deg,transparent 40%,#555 40%,#555 60%,transparent 60%);"></div>
<div class="a" style="left:702px;top:33px;width:5px;height:6px;background:linear-gradient(90deg,transparent 30%,#333 30%,#333 45%,transparent 45%,transparent 60%,#2a2a50 60%,#2a2a50 75%,transparent 75%);"></div>
<div class="a" style="left:711px;top:33px;width:6px;height:6px;background:#30c050;clip-path:polygon(35% 0,65% 0,65% 35%,100% 35%,100% 65%,65% 65%,65% 100%,35% 100%,35% 65%,0 65%,0 35%,35% 35%)"></div>
<div class="a" style="left:682px;top:42px;width:36px;height:176px;background:#8c8c8c;border:1px solid #999"></div>
<div class="a" style="left:683px;top:43px;width:8px;height:8px;background:radial-gradient(#f0f0f0 30%,#8a90a0 60%);border:1px solid #707a90"></div>
<div class="t" style="left:692px;top:44px;font-size:5px;line-height:7px;color:#222;transform:scaleX(0.75);transform-origin:0 0">Master</div>
<div class="a" style="left:684px;top:54px;width:4px;height:4px;background:#9aa0b0;border-radius:2px"></div>
<div class="a" style="left:691px;top:53px;width:4px;height:5px;background:radial-gradient(#f08080,#b02020);border-radius:2px"></div>
<div class="a" style="left:697px;top:53px;width:5px;height:5px;background:radial-gradient(#f0f0ff,#6060e0);border-radius:3px"></div>
<div class="a" style="left:706px;top:53px;width:2px;height:6px;background:#7a70a8;"></div>
<div class="t" style="left:696px;top:60px;font-size:3.5px;line-height:7px;color:#222;">-Inf.</div>
<div class="t" style="left:706px;top:60px;font-size:3.5px;line-height:7px;color:#222;">-Inf.</div>
<div class="a" style="left:699px;top:66px;width:3px;height:137px;background:linear-gradient(#a88878,#a0a088 15%,#8aa08a 50%,#78a084);"></div>
<div class="a" style="left:709px;top:66px;width:3px;height:137px;background:linear-gradient(#a88878,#a0a088 15%,#8aa08a 50%,#78a084);"></div>
<div class="t" style="left:702px;top:69px;font-size:3.2px;line-height:7px;color:#222;">-3</div>
<div class="t" style="left:702px;top:76px;font-size:3.2px;line-height:7px;color:#222;">-6</div>
<div class="t" style="left:702px;top:83px;font-size:3.2px;line-height:7px;color:#222;">-9</div>
<div class="t" style="left:702px;top:89px;font-size:3.2px;line-height:7px;color:#222;">-12</div>
<div class="t" style="left:702px;top:96px;font-size:3.2px;line-height:7px;color:#222;">-15</div>
<div class="t" style="left:702px;top:103px;font-size:3.2px;line-height:7px;color:#222;">-18</div>
<div class="t" style="left:702px;top:110px;font-size:3.2px;line-height:7px;color:#222;">-21</div>
<div class="t" style="left:702px;top:117px;font-size:3.2px;line-height:7px;color:#222;">-24</div>
<div class="t" style="left:702px;top:123px;font-size:3.2px;line-height:7px;color:#222;">-27</div>
<div class="t" style="left:702px;top:130px;font-size:3.2px;line-height:7px;color:#222;">-30</div>
<div class="t" style="left:702px;top:137px;font-size:3.2px;line-height:7px;color:#222;">-33</div>
<div class="t" style="left:702px;top:144px;font-size:3.2px;line-height:7px;color:#222;">-36</div>
<div class="t" style="left:702px;top:151px;font-size:3.2px;line-height:7px;color:#222;">-39</div>
<div class="t" style="left:702px;top:157px;font-size:3.2px;line-height:7px;color:#222;">-42</div>
<div class="t" style="left:702px;top:164px;font-size:3.2px;line-height:7px;color:#222;">-45</div>
<div class="t" style="left:702px;top:171px;font-size:3.2px;line-height:7px;color:#222;">-48</div>
<div class="t" style="left:702px;top:178px;font-size:3.2px;line-height:7px;color:#222;">-51</div>
<div class="t" style="left:702px;top:185px;font-size:3.2px;line-height:7px;color:#222;">-54</div>
<div class="t" style="left:702px;top:191px;font-size:3.2px;line-height:7px;color:#222;">-57</div>
<div class="a" style="left:688px;top:64px;width:1px;height:138px;background:#787878;"></div>
<div class="a" style="left:685px;top:111px;width:8px;height:8px;background:linear-gradient(#f4f4f4 0,#f4f4f4 30%,#888 30%,#888 45%,#f4f4f4 45%,#f4f4f4 80%,#888 80%);"></div>
<div class="a" style="left:688px;top:111px;width:1px;height:8px;background:#888;"></div>
<div class="t" style="left:686px;top:201px;font-size:3.5px;line-height:7px;color:#334;">fn</div>
<div class="t" style="left:697px;top:204px;font-size:3.5px;line-height:7px;color:#222;">0.0</div>
<div class="t" style="left:707px;top:204px;font-size:3.5px;line-height:7px;color:#222;">0.0</div>
<div class="a" style="left:682px;top:210px;width:37px;height:8px;background:#f2f2f2;border:1px solid #bbb"></div>
<div class="a" style="left:689px;top:211px;width:17px;height:6px;background:linear-gradient(#eee,#c8c8c8);border:1px solid #aaa"></div>
<div class="a" style="left:684px;top:213px;width:2px;height:2px;background:#666;"></div>
<div class="a" style="left:714px;top:213px;width:2px;height:2px;background:#666;"></div>
<div class="a" style="left:144px;top:219px;width:576px;height:22px;background:#8b8b8b;"></div>
<div class="a" style="left:147px;top:223px;width:1px;height:1px;background:#333;"></div>
<div class="a" style="left:147px;top:225px;width:1px;height:1px;background:#333;"></div>
<div class="a" style="left:147px;top:227px;width:1px;height:1px;background:#333;"></div>
<div class="a" style="left:147px;top:229px;width:1px;height:1px;background:#333;"></div>
<div class="a" style="left:147px;top:231px;width:1px;height:1px;background:#333;"></div>
<div class="a" style="left:147px;top:233px;width:1px;height:1px;background:#333;"></div>
<div class="a" style="left:147px;top:235px;width:1px;height:1px;background:#333;"></div>
<div class="t" style="left:214px;top:225px;font-size:10px;line-height:11px;color:#1e1e1e;transform:scaleX(0.7);transform-origin:0 0">00:00:00.00</div>
<div class="a" style="left:144px;top:241px;width:110px;height:165px;background:#8f8f8f;"></div>
<div class="a" style="left:144px;top:241px;width:2px;height:165px;background:#858585;"></div>
<div class="a" style="left:252px;top:241px;width:2px;height:165px;background:#7c7c7c;"></div>
<div class="a" style="left:146px;top:404px;width:106px;height:1px;background:#a0a0a0;"></div>
<div class="a" style="left:146px;top:295px;width:106px;height:1px;background:#7c7c7c;"></div>
<div class="a" style="left:254px;top:233px;width:460px;height:173px;background:#7b7b7b;"></div>
<div class="a" style="left:254px;top:219px;width:460px;height:14px;background:#8b8b8b;"></div>
<div class="a" style="left:254px;top:233px;width:460px;height:1px;background:#a8a8a8;"></div>
<div class="a" style="left:254px;top:234px;width:460px;height:7px;background:#8a8a8a;"></div>
<div class="a" style="left:254px;top:241px;width:460px;height:54px;background:#8a8a8a;"></div>
<div class="a" style="left:254px;top:267px;width:460px;height:1px;background:#747474;"></div>
<div class="a" style="left:254px;top:295px;width:460px;height:1px;background:#6e6e6e;"></div>
<div class="a" style="left:254px;top:241px;width:1px;height:165px;background:#444;"></div>
<div class="a" style="left:293px;top:241px;width:1px;height:54px;background:repeating-linear-gradient(#626262 0 1px,transparent 1px 2.5px);"></div>
<div class="a" style="left:330px;top:241px;width:1px;height:54px;background:repeating-linear-gradient(#626262 0 1px,transparent 1px 2.5px);"></div>
<div class="a" style="left:368px;top:241px;width:1px;height:54px;background:repeating-linear-gradient(#626262 0 1px,transparent 1px 2.5px);"></div>
<div class="a" style="left:405px;top:241px;width:1px;height:54px;background:repeating-linear-gradient(#626262 0 1px,transparent 1px 2.5px);"></div>
<div class="a" style="left:443px;top:241px;width:1px;height:54px;background:repeating-linear-gradient(#626262 0 1px,transparent 1px 2.5px);"></div>
<div class="a" style="left:481px;top:241px;width:1px;height:54px;background:repeating-linear-gradient(#626262 0 1px,transparent 1px 2.5px);"></div>
<div class="a" style="left:518px;top:241px;width:1px;height:54px;background:repeating-linear-gradient(#626262 0 1px,transparent 1px 2.5px);"></div>
<div class="a" style="left:556px;top:241px;width:1px;height:54px;background:repeating-linear-gradient(#626262 0 1px,transparent 1px 2.5px);"></div>
<div class="a" style="left:593px;top:241px;width:1px;height:54px;background:repeating-linear-gradient(#626262 0 1px,transparent 1px 2.5px);"></div>
<div class="a" style="left:631px;top:241px;width:1px;height:54px;background:repeating-linear-gradient(#626262 0 1px,transparent 1px 2.5px);"></div>
<div class="a" style="left:669px;top:241px;width:1px;height:54px;background:repeating-linear-gradient(#626262 0 1px,transparent 1px 2.5px);"></div>
<div class="a" style="left:706px;top:241px;width:1px;height:54px;background:repeating-linear-gradient(#626262 0 1px,transparent 1px 2.5px);"></div>
<div class="a" style="left:255px;top:239px;width:459px;height:1px;background:repeating-linear-gradient(90deg,#a2a2a2 0 1px,transparent 1px 3.76px);"></div>
<div class="a" style="left:255px;top:238px;width:459px;height:1px;background:repeating-linear-gradient(90deg,#a8a8a8 0 1px,transparent 1px 37.6px);"></div>
<div class="a" style="left:254px;top:233px;width:460px;height:8px;overflow:hidden">
<div class="t" style="left:2px;top:1px;font-size:4.8px;line-height:6px;color:#1e1e1e;transform:scaleX(0.72);transform-origin:0 0">00:00:00</div>
<div class="t" style="left:39px;top:1px;font-size:4.8px;line-height:6px;color:#1e1e1e;transform:scaleX(0.72);transform-origin:0 0">00:00:10</div>
<div class="t" style="left:77px;top:1px;font-size:4.8px;line-height:6px;color:#1e1e1e;transform:scaleX(0.72);transform-origin:0 0">00:00:20</div>
<div class="t" style="left:114px;top:1px;font-size:4.8px;line-height:6px;color:#1e1e1e;transform:scaleX(0.72);transform-origin:0 0">00:00:30</div>
<div class="t" style="left:152px;top:1px;font-size:4.8px;line-height:6px;color:#1e1e1e;transform:scaleX(0.72);transform-origin:0 0">00:00:40</div>
<div class="t" style="left:190px;top:1px;font-size:4.8px;line-height:6px;color:#1e1e1e;transform:scaleX(0.72);transform-origin:0 0">00:00:50</div>
<div class="t" style="left:227px;top:1px;font-size:4.8px;line-height:6px;color:#1e1e1e;transform:scaleX(0.72);transform-origin:0 0">00:01:00</div>
<div class="t" style="left:265px;top:1px;font-size:4.8px;line-height:6px;color:#1e1e1e;transform:scaleX(0.72);transform-origin:0 0">00:01:10</div>
<div class="t" style="left:302px;top:1px;font-size:4.8px;line-height:6px;color:#1e1e1e;transform:scaleX(0.72);transform-origin:0 0">00:01:20</div>
<div class="t" style="left:340px;top:1px;font-size:4.8px;line-height:6px;color:#1e1e1e;transform:scaleX(0.72);transform-origin:0 0">00:01:30</div>
<div class="t" style="left:378px;top:1px;font-size:4.8px;line-height:6px;color:#1e1e1e;transform:scaleX(0.72);transform-origin:0 0">00:01:40</div>
<div class="t" style="left:415px;top:1px;font-size:4.8px;line-height:6px;color:#1e1e1e;transform:scaleX(0.72);transform-origin:0 0">00:01:50</div>
<div class="t" style="left:453px;top:1px;font-size:4.8px;line-height:6px;color:#1e1e1e;transform:scaleX(0.72);transform-origin:0 0">00:02:00</div>
</div>
<div class="a" style="left:255px;top:231px;width:2px;height:3px;background:#f0e020;"></div>
<div class="a" style="left:255px;top:234px;width:2px;height:6px;background:#dcdcdc;"></div>
<div class="a" style="left:268px;top:224px;width:6px;height:7px;background:#e89050;"></div>
<div class="t" style="left:270px;top:224px;font-size:4px;line-height:7px;color:#fff;">1</div>
<div class="a" style="left:294px;top:224px;width:6px;height:7px;background:#5ca860;"></div>
<div class="t" style="left:296px;top:224px;font-size:4px;line-height:7px;color:#fff;">2</div>
<div class="a" style="left:714px;top:219px;width:6px;height:187px;background:#8a8a8a;"></div>
<div class="a" style="left:715px;top:221px;width:5px;height:6px;background:#c4c4c4;border:1px solid #6a6a6a"></div>
<div class="a" style="left:716px;top:222px;width:2px;height:3px;background:#333;"></div>
<div class="a" style="left:715px;top:228px;width:5px;height:6px;background:#c0c0c0;border:1px solid #707070"></div>
<div class="a" style="left:717px;top:230px;width:2px;height:2px;background:#333;"></div>
<div class="a" style="left:715px;top:234px;width:5px;height:146px;background:linear-gradient(90deg,#a0a0a0,#b8b8b8,#909090);border-radius:1px"></div>
<div class="a" style="left:715px;top:382px;width:5px;height:6px;background:linear-gradient(90deg,#b8b8b8,#a0a0a0);border:1px solid #787878"></div>
<div class="a" style="left:715px;top:389px;width:5px;height:6px;background:linear-gradient(90deg,#b8b8b8,#a0a0a0);border:1px solid #787878"></div>
<div class="a" style="left:715px;top:396px;width:5px;height:2px;background:#999;"></div>
<div class="a" style="left:715px;top:398px;width:5px;height:7px;background:linear-gradient(90deg,#b8b8b8,#a0a0a0);border:1px solid #787878"></div>
<div class="a" style="left:717px;top:384px;width:2px;height:2px;background:#2a2a2a;"></div>
<div class="a" style="left:717px;top:391px;width:2px;height:2px;background:#2a2a2a;"></div>
<div class="a" style="left:717px;top:401px;width:2px;height:1px;background:#2a2a2a;"></div>
<div class="a" style="left:254px;top:406px;width:466px;height:7px;background:linear-gradient(#6e6e6e 0 1px,#a6a6a6 1px,#8e8e8e 60%,#747474);"></div>
<div class="a" style="left:255px;top:407px;width:4px;height:5px;background:#a8a8a8;border-right:1px solid #777"></div>
<div class="a" style="left:256px;top:409px;width:2px;height:2px;background:#111;"></div>
<div class="a" style="left:260px;top:407px;width:4px;height:5px;background:linear-gradient(90deg,#b8b8b8,#909090);border:1px solid #808080"></div>
<div class="a" style="left:694px;top:406px;width:6px;height:6px;background:#a0a0a0;border:1px solid #707070"></div>
<div class="a" style="left:701px;top:406px;width:6px;height:6px;background:#b0b0b0;border:1px solid #707070"></div>
<div class="a" style="left:707px;top:406px;width:6px;height:6px;background:#b0b0b0;border:1px solid #707070"></div>
<div class="a" style="left:713px;top:406px;width:6px;height:6px;background:#b0b0b0;border:1px solid #707070"></div>
<div class="a" style="left:703px;top:408px;width:2px;height:2px;background:#222;"></div>
<div class="a" style="left:709px;top:408px;width:2px;height:2px;background:#222;"></div>
<div class="a" style="left:714px;top:409px;width:3px;height:1px;background:#222;"></div>
<div class="a" style="left:144px;top:412px;width:576px;height:21px;background:#8b8b8b;"></div>
<div class="a" style="left:144px;top:406px;width:110px;height:6px;background:#8f8f8f;"></div>
<div class="t" style="left:146px;top:412px;font-size:4.5px;line-height:7px;color:#1a1a1a;">Rate: 0.00</div>
<div class="a" style="left:175px;top:416px;width:73px;height:1px;background:#a8a8a8;"></div>
<div class="a" style="left:207px;top:413px;width:8px;height:6px;background:repeating-linear-gradient(90deg,#444 0 1px,transparent 1px 2px);"></div>
<div class="a" style="left:216px;top:419px;width:4px;height:4px;background:#e88040;clip-path:polygon(50% 0,100% 100%,0 100%)"></div>
<svg class="a" style="left:256px;top:415px" width="6" height="6" viewBox="0 0 6 6"><circle cx="3" cy="3" r="2.4" fill="#8a7070" stroke="#e04848" stroke-width="0.9"/><circle cx="3" cy="3" r="1.1" fill="#602828"/></svg>
<svg class="a" style="left:264px;top:415px" width="6" height="6" viewBox="0 0 6 6"><path d="M3 1 A2.2 2.2 0 1 0 5 3" stroke="#474747" stroke-width="1.2" fill="none"/><path d="M3 0 L4.5 1 L3 2Z" fill="#474747"/></svg>
<svg class="a" style="left:272px;top:415px" width="6" height="6" viewBox="0 0 6 6"><rect x="0.3" y="0.5" width="1" height="5" fill="#474747"/><path d="M1.5 0.5 L5.5 3 L1.5 5.5Z" fill="#474747"/></svg>
<svg class="a" style="left:280px;top:415px" width="6" height="6" viewBox="0 0 6 6"><path d="M1 0.5 L5.5 3 L1 5.5Z" fill="#474747"/></svg>
<svg class="a" style="left:289px;top:415px" width="6" height="6" viewBox="0 0 6 6"><rect x="1" y="0.5" width="1.5" height="5" fill="#474747"/><rect x="3.5" y="0.5" width="1.5" height="5" fill="#474747"/></svg>
<svg class="a" style="left:297px;top:415px" width="6" height="6" viewBox="0 0 6 6"><rect x="1" y="0.5" width="4.5" height="5" fill="#474747"/></svg>
<svg class="a" style="left:305px;top:415px" width="6" height="6" viewBox="0 0 6 6"><rect x="0.5" y="0.5" width="1" height="5" fill="#474747"/><path d="M5 0.5 L1.5 3 L5 5.5Z" fill="#474747"/></svg>
<svg class="a" style="left:313px;top:415px" width="6" height="6" viewBox="0 0 6 6"><path d="M1 0.5 L4.5 3 L1 5.5Z" fill="#474747"/><rect x="4.5" y="0.5" width="1" height="5" fill="#474747"/></svg>
<svg class="a" style="left:321px;top:415px" width="6" height="6" viewBox="0 0 6 6"><path d="M3 0.5 L0 3 L3 5.5Z" fill="#474747"/><rect x="3.5" y="0.5" width="2" height="5" fill="#474747"/></svg>
<svg class="a" style="left:330px;top:415px" width="6" height="6" viewBox="0 0 6 6"><rect x="0.5" y="0.5" width="2" height="5" fill="#474747"/><path d="M3 0.5 L6 3 L3 5.5Z" fill="#474747"/></svg>
<div class="a" style="left:643px;top:426px;width:77px;height:7px;background:#858585;border-top:1px solid #a0a0a0;border-left:1px solid #9a9a9a"></div>
<div class="t" style="left:645px;top:426.5px;font-size:4.8px;line-height:7px;color:#181818;transform:scaleX(0.8);transform-origin:0 0">Record Time (2 channels):&nbsp; 404:36:05</div>
<div class="a" style="left:628px;top:415px;width:2px;height:7px;background:linear-gradient(#ccc,#444);border-radius:1px"></div>
<div class="a" style="left:632px;top:415px;width:22px;height:8px;background:#878787;border:1px solid #9c9c9c"></div>
<div class="t" style="left:634px;top:416px;font-size:5px;line-height:7px;color:#161616;transform:scaleX(0.78);transform-origin:0 0">00:00:00.00</div>
<div class="a" style="left:660px;top:416px;width:2px;height:3px;background:#d0c040;"></div>
<div class="a" style="left:664px;top:415px;width:23px;height:8px;background:#878787;border:1px solid #9c9c9c"></div>
<div class="a" style="left:691px;top:415px;width:5px;height:7px;background:linear-gradient(#e0d040 30%,#2040a0 30%);"></div>
<div class="a" style="left:696px;top:415px;width:23px;height:8px;background:#878787;border:1px solid #9c9c9c"></div>
<div class="a" style="left:146px;top:241px;width:106px;height:26px;background:#8ea3c3;"></div>
<div class="a" style="left:146px;top:267px;width:106px;height:1px;background:#a8b0c0;"></div>
<div class="a" style="left:147px;top:243px;width:4px;height:2px;background:#dde4f0;"></div>
<div class="a" style="left:147px;top:246px;width:4px;height:2px;background:#dde4f0;"></div>
<div class="a" style="left:153px;top:242px;width:8px;height:7px;background:linear-gradient(#5a70a0,#34487a);border-radius:1px"></div>
<div class="a" style="left:154px;top:243px;width:1px;height:2px;background:#fff;"></div>
<div class="a" style="left:159px;top:245px;width:1px;height:3px;background:#e0e8ff;"></div>
<div class="a" style="left:163px;top:242px;width:37px;height:7px;background:#999;border:1px solid #8898b4"></div>
<div class="a" style="left:203px;top:242px;width:5px;height:7px;background:linear-gradient(45deg,transparent 35%,#3a6040 35%,#d0d8e0 50%,#c04040 65%,transparent 65%);"></div>
<div class="a" style="left:211px;top:243px;width:5px;height:5px;background:linear-gradient(135deg,#f8f8f8 50%,#6070c0 50%);border:1px solid #555"></div>
<div class="a" style="left:218px;top:243px;width:5px;height:5px;background:#8c9ab8;border-radius:2px;border:1px solid #7a88a0"></div>
<div class="a" style="left:229px;top:243px;width:5px;height:5px;background:radial-gradient(#b04040 40%,#e06060 60%);border-radius:3px"></div>
<div class="a" style="left:235px;top:245px;width:2px;height:1px;background:#333;"></div>
<div class="a" style="left:240px;top:243px;width:5px;height:5px;background:radial-gradient(#f0f0ff 30%,#7070e0 70%);border-radius:3px"></div>
<div class="a" style="left:248px;top:242px;width:2px;height:7px;background:#6a60a0;"></div>
<div class="t" style="left:153px;top:252px;font-size:4.5px;line-height:7px;color:#162030;letter-spacing:-0.15px">Level: 100.0 %</div>
<div class="a" style="left:185px;top:254px;width:37px;height:1px;background:#333a48;"></div>
<div class="a" style="left:221px;top:252px;width:6px;height:6px;background:linear-gradient(90deg,#f0f0f0 0 2px,#7a7a7a 2px 3px,#f0f0f0 3px 5px,#7a7a7a 5px);border-radius:1px"></div>
<div class="a" style="left:231px;top:252px;width:5px;height:6px;background:linear-gradient(#30a040,#60c870);border:1px solid #3a5a3a"></div>
<div class="a" style="left:239px;top:252px;width:3px;height:6px;background:#7e8ca8;"></div>
<div class="a" style="left:246px;top:252px;width:3px;height:6px;background:#7e8ca8;"></div>
<div class="a" style="left:146px;top:268px;width:106px;height:27px;background:#8d8d8d;"></div>
<div class="a" style="left:147px;top:270px;width:4px;height:2px;background:#c8c8d8;"></div>
<div class="a" style="left:147px;top:273px;width:4px;height:2px;background:#c8c8d8;"></div>
<div class="a" style="left:153px;top:269px;width:8px;height:7px;background:linear-gradient(#7a3038,#5a2028);border-radius:1px"></div>
<div class="a" style="left:158px;top:272px;width:1px;height:3px;background:#f0d0d0;"></div>
<div class="a" style="left:163px;top:269px;width:19px;height:7px;background:#999;border:1px solid #858585"></div>
<div class="a" style="left:184px;top:270px;width:5px;height:5px;background:radial-gradient(#8a4a4a 30%,#c85050 45%,#8a8a8a 75%);border-radius:3px"></div>
<div class="a" style="left:192px;top:269px;width:5px;height:6px;background:linear-gradient(#3050a0,#20306a);border:1px solid #6a80b0"></div>
<div class="a" style="left:201px;top:270px;width:4px;height:5px;background:linear-gradient(45deg,transparent 35%,#8090d0 35%,#8090d0 65%,transparent 65%);"></div>
<div class="a" style="left:207px;top:271px;width:6px;height:2px;background:#40a858;"></div>
<div class="a" style="left:209px;top:269px;width:2px;height:6px;background:#40a858;"></div>
<div class="a" style="left:215px;top:272px;width:2px;height:1px;background:#333;"></div>
<div class="a" style="left:219px;top:270px;width:5px;height:5px;background:radial-gradient(#a04040 35%,#c86060 55%,#8a8a8a 80%);border-radius:3px"></div>
<div class="a" style="left:226px;top:272px;width:2px;height:1px;background:#333;"></div>
<div class="a" style="left:232px;top:270px;width:5px;height:5px;background:radial-gradient(#f0f0ff 30%,#7070e0 70%);border-radius:3px"></div>
<div class="a" style="left:239px;top:269px;width:1px;height:7px;background:#6a60a0;"></div>
<div class="t" style="left:149px;top:279px;font-size:4.5px;line-height:7px;color:#1a1a1a;">0.0 dB</div>
<div class="a" style="left:166px;top:282px;width:25px;height:1px;background:#5a5a5a;"></div>
<div class="a" style="left:180px;top:279px;width:6px;height:6px;background:linear-gradient(90deg,#f0f0f0 0 2px,#7a7a7a 2px 3px,#f0f0f0 3px 5px,#7a7a7a 5px);border-radius:1px"></div>
<div class="t" style="left:197px;top:279px;font-size:4.5px;line-height:7px;color:#1a1a1a;">Center</div>
<div class="a" style="left:213px;top:282px;width:28px;height:1px;background:#5a5a5a;"></div>
<div class="a" style="left:225px;top:278px;width:4px;height:7px;background:#e8e8e8;border:1px solid #999"></div>
<div class="a" style="left:243px;top:272px;width:8px;height:23px;background:linear-gradient(#90a894,#7a9c84);"></div>
<div class="a" style="left:245px;top:274px;width:4px;height:1px;background:#506a58;"></div>
<div class="a" style="left:245px;top:281px;width:4px;height:1px;background:#506a58;"></div>
<div class="a" style="left:245px;top:288px;width:4px;height:1px;background:#506a58;"></div>
<div class="a" style="left:255px;top:241px;width:39px;height:25px;background:#d6d6d6;border-top:1px solid #9a9a9a"></div>
<svg class="a" style="left:256px;top:243px" width="25" height="22" viewBox="0 0 25 22"><defs><linearGradient id="sskyev1" x1="0" y1="0" x2="1" y2="0"><stop offset="0" stop-color="#4074b0"/><stop offset="0.55" stop-color="#5288c0"/><stop offset="1" stop-color="#80b0dc"/></linearGradient>
<linearGradient id="snowev1" x1="0" y1="0" x2="0" y2="1"><stop offset="0" stop-color="#f2f4f8"/><stop offset="0.3" stop-color="#e8ebf0"/><stop offset="0.65" stop-color="#e0e4ea"/><stop offset="1" stop-color="#d6dbe3"/></linearGradient></defs>
<filter id="sbev1" x="0" y="0" width="1" height="1"><feGaussianBlur stdDeviation="0.45"/></filter>
<g transform="scale(0.1865671641791045,0.17886178861788618)" filter="url(#sbev1)">
<rect width="134" height="123" fill="url(#sskyev1)"/>
<ellipse cx="124" cy="13" rx="16" ry="6" fill="#e8f0f6" opacity="0.7"/>
<path d="M0 19 L3 17.4 L8.5 16 L22 14.5 L33 11 L36 10.2 L47 13 L52 11 L62 11.5 L69 10.5 L78 10 L90 9 L99 8 L106 11 L111 12.5 L120 15 L134 17 L134 123 L0 123Z" fill="url(#snowev1)"/>
<path d="M0 17.5 L2 16.5 L6 17 L4 18.5Z M8 16 L9 14.6 L10 16Z M33 11.5 L34.5 9.5 L36.5 9.8 L37 11Z M52 11.5 L54 8 L58.5 7.5 L61 9.5 L62 11.5Z M69 10.5 L70 9.5 L72 9.8 L72 11Z M78.7 12 L81 9.5 L86 8.8 L89 11 L90 9 L93 8 L96 9 L99.5 6.6 L103 7 L106 11 L108 15 L96 16.5 L86 15Z" fill="#27313c"/>
<ellipse cx="40" cy="32" rx="50" ry="5" fill="#d0d8e2" opacity="0.5"/>
<path d="M46 40 C58 37 80 38 100 40 C118 42 130 44 134 46 L134 54 C122 52 104 50 88 48 C70 46 55 44 46 42Z" fill="#b2bccc"/>
<path d="M58 44 C72 41 90 44 100 47" stroke="#eef2f6" stroke-width="1.2" fill="none" opacity="0.8"/>
<path d="M1 52 L3 60 M4 58 C8 55 12 52 18 50" stroke="#a8b2c0" stroke-width="1.2" fill="none"/>
<path d="M21 67 C30 68 44 73 55 77 M45 61 C47 63 49 65 51 67 M69 76 C85 82 110 96 134 108 M47 50 C56 53 64 57 74 60" stroke="#7c8ca0" stroke-width="0.9" fill="none"/>
<ellipse cx="60" cy="100" rx="80" ry="30" fill="#d0d6e0" opacity="0.45"/>
</g></svg>
<div class="a" style="left:256px;top:243px;width:25px;height:22px;background:rgba(90,100,120,0.12);"></div>
<div class="a" style="left:288px;top:250px;width:4px;height:4px;background:#80d080;border:1px solid #8890e0"></div>
<div class="a" style="left:287px;top:258px;width:6px;height:4px;background:#7a8090;clip-path:polygon(35% 0,65% 0,65% 35%,100% 35%,100% 65%,65% 65%,65% 100%,35% 100%,35% 65%,0 65%,0 35%,35% 35%)"></div>
<div class="a" style="left:294px;top:241px;width:45px;height:25px;background:#6b7fa8;"></div>
<svg class="a" style="left:295px;top:242px" width="26" height="23" viewBox="0 0 26 23"><defs><linearGradient id="skyev2" x1="0" y1="0" x2="0" y2="1"><stop offset="0" stop-color="#4e6f94"/><stop offset="1" stop-color="#7896b8"/></linearGradient>
<linearGradient id="watev2" x1="0" y1="0" x2="0" y2="1"><stop offset="0" stop-color="#56747e"/><stop offset="0.2" stop-color="#44626a"/><stop offset="0.55" stop-color="#36504f"/><stop offset="1" stop-color="#2a4242"/></linearGradient>
<linearGradient id="mtev2" x1="0" y1="0" x2="0" y2="1"><stop offset="0" stop-color="#f4f4f6"/><stop offset="0.55" stop-color="#dcdfe4"/><stop offset="1" stop-color="#a0a8b2"/></linearGradient></defs>
<filter id="wbev2" x="0" y="0" width="1" height="1"><feGaussianBlur stdDeviation="0.35"/></filter>
<g transform="scale(0.19402985074626866,0.18699186991869918)" filter="url(#wbev2)">
<rect width="134" height="123" fill="url(#skyev2)"/>
<path d="M0 24 L12 22 L22 24 L27 26 L32 25 L35 26.5 L44 27 L50 29.5 L58 29.5 L65 28 L70 26.5 L90 26 L110 26 L134 26.5 L134 45 L0 45Z" fill="url(#mtev2)"/>
<path d="M70 27 L134 26.5 L134 34 L70 32Z" fill="#eef0ec" opacity="0.6"/>
<path d="M2 30 L20 30 L26 38 L8 44 L0 44Z" fill="#c8ccd4" opacity="0.6"/>
<path d="M3 44.6 L4 41.5 L9 37.4 L20 35.3 L34 34.6 L48 34.2 L68 35.3 L87 34.6 L95 39 L98 44.6Z" fill="#2e4236"/>
<path d="M98 45 L100 42 L110 41 L134 42 L134 45Z" fill="#7a8896" opacity="0.8"/>
<rect y="44.6" width="134" height="78.4" fill="url(#watev2)"/>
<ellipse cx="22" cy="54" rx="26" ry="9" fill="#90aab4" opacity="0.12"/>
<path d="M0 66 C30 60 60 56 100 50 L100 51 C60 58 30 62 0 68Z" fill="#88a4ae" opacity="0.15"/>
<path d="M114 62 L117 58 L121 57 L122 53.5 L123.5 54 L124 57 L128 59 L131 61 L129 65 L116 65Z" fill="#eef2f4"/>
<path d="M116 65 L129 65 L127 68 L118 68Z" fill="#8aa0a8" opacity="0.7"/>
</g></svg>
<div class="a" style="left:332px;top:249px;width:5px;height:6px;background:#e8ecf4;clip-path:polygon(20% 0,80% 0,100% 30%,100% 100%,0 100%,0 30%)"></div>
<div class="a" style="left:332px;top:257px;width:6px;height:6px;background:#e8ecf4;clip-path:polygon(35% 0,65% 0,65% 35%,100% 35%,100% 65%,65% 65%,65% 100%,35% 100%,35% 65%,0 65%,0 35%,35% 35%)"></div>
<div class="a" style="left:294px;top:251px;width:7px;height:5px;background:#f8f8f8;border:1px solid #333"></div>
<div class="a" style="left:255px;top:241px;width:1px;height:1px;background:#2030e0;"></div>
<div class="a" style="left:337px;top:241px;width:2px;height:2px;background:#2030e0;"></div>
<div class="a" style="left:255px;top:265px;width:1px;height:1px;background:#333;"></div>
<div class="a" style="left:255px;top:266px;width:84px;height:2px;background:#8a8a8a;"></div>
<div class="a" style="left:255px;top:268px;width:84px;height:26px;background:#d6d6d6;"></div>
<div class="a" style="left:255px;top:281px;width:84px;height:1px;background:#a0a0a0;"></div>
<div class="a" style="left:255px;top:275px;width:39px;height:1px;background:#a04a58;"></div>
<div class="a" style="left:255px;top:288px;width:39px;height:1px;background:#a04a58;"></div>
<div class="a" style="left:271px;top:274px;width:6px;height:2px;background:#8a2838;"></div>
<div class="a" style="left:280px;top:274px;width:2px;height:2px;background:#8a2838;"></div>
<div class="a" style="left:258px;top:287px;width:7px;height:2px;background:#8a2838;"></div>
<div class="a" style="left:271px;top:287px;width:9px;height:2px;background:#8a2838;"></div>
<div class="a" style="left:285px;top:274px;width:6px;height:4px;background:#8e9eb8;clip-path:polygon(50% 0,100% 50%,50% 100%,0 50%)"></div>
<div class="a" style="left:285px;top:286px;width:6px;height:4px;background:#8e9eb8;clip-path:polygon(50% 0,100% 50%,50% 100%,0 50%)"></div>
<div class="a" style="left:294px;top:268px;width:45px;height:26px;background:#d8d8d8;border:1px solid #7ab0e8"></div>
<svg class="a" style="left:295px;top:269px" width="43" height="12" viewBox="0 0 43 12"><path d="M0 7 L2 5 L4 6 L6 4.5 L8 5.5 L10 5 L12 6 L14 4.8 L16 5.5 L18 4.5 L20 5 L22 4.8 L24 5.2 L26 4.5 L28 5 L29 2 L31 1 L33 1.5 L35 0.5 L37 1 L39 0.8 L41 1.2 L43 1 L43 11 L41 10.6 L39 11.2 L37 10.8 L35 11.5 L33 10.6 L31 11 L29 10 L28 7.2 L26 7.5 L24 7 L22 7.4 L20 7 L18 7.5 L16 6.8 L14 7.3 L12 6.8 L10 7.2 L8 6.6 L6 7.5 L4 6.8 L2 7.2Z" fill="#8e2434"/></svg>
<svg class="a" style="left:295px;top:282px" width="43" height="12" viewBox="0 0 43 12"><path d="M0 7 L2 5 L4 6 L6 4.5 L8 5.5 L10 5 L12 6 L14 4.8 L16 5.5 L18 4.5 L20 5 L22 4.8 L24 5.2 L26 4.5 L28 5 L29 2 L31 1 L33 1.5 L35 0.5 L37 1 L39 0.8 L41 1.2 L43 1 L43 11 L41 10.6 L39 11.2 L37 10.8 L35 11.5 L33 10.6 L31 11 L29 10 L28 7.2 L26 7.5 L24 7 L22 7.4 L20 7 L18 7.5 L16 6.8 L14 7.3 L12 6.8 L10 7.2 L8 6.6 L6 7.5 L4 6.8 L2 7.2Z" fill="#8e2434"/></svg>
<div class="a" style="left:295px;top:269px;width:5px;height:12px;background:#4050c0;opacity:0.5"></div>
<div class="a" style="left:294px;top:279px;width:7px;height:5px;background:#f8f8f8;border:1px solid #333"></div>
<div class="a" style="left:332px;top:285px;width:6px;height:6px;background:#c8ccd8;clip-path:polygon(35% 0,65% 0,65% 35%,100% 35%,100% 65%,65% 65%,65% 100%,35% 100%,35% 65%,0 65%,0 35%,35% 35%)"></div>
<div class="a" style="left:337px;top:268px;width:2px;height:2px;background:#30d0d0;"></div>
<div class="a" style="left:293px;top:242px;width:1px;height:52px;background:repeating-linear-gradient(#9a9a9a 0 1px,transparent 1px 3px);"></div>
<div class="a" style="left:268px;top:232px;width:1px;height:174px;background:#cc9466;"></div>
<div class="a" style="left:294px;top:233px;width:1px;height:173px;background:#609a6c;"></div>
<div class="a" style="left:299px;top:233px;width:1px;height:173px;background:#609a6c;"></div>
<div class="ln" style="left:93px;top:14px;width:37px;height:1px"></div>
<div class="ln" style="left:140px;top:31px;width:2px;height:184px"></div>
<div class="ln" style="left:93px;top:123px;width:47px;height:1px"></div>
<div class="ln" style="left:93px;top:228px;width:37px;height:1px"></div>
<div class="ln" style="left:140px;top:240px;width:2px;height:159px"></div>
<div class="ln" style="left:93px;top:320px;width:47px;height:1px"></div>
<div class="ln" style="left:93px;top:414px;width:37px;height:1px"></div>
<div class="ln" style="left:378px;top:23px;width:2px;height:2px"></div>
<div class="ln" style="left:380px;top:24px;width:1px;height:1px"></div>
<div class="ln" style="left:380px;top:25px;width:391px;height:1px"></div>
<div class="ln" style="left:733px;top:224px;width:38px;height:1px"></div>
<div class="ln" style="left:733px;top:235px;width:38px;height:1px"></div>
<div class="ln" style="left:722px;top:241px;width:2px;height:157px"></div>
<div class="ln" style="left:724px;top:319px;width:46px;height:1px"></div>
<div class="ln" style="left:734px;top:429px;width:37px;height:1px"></div>
<div class="ln" style="left:293px;top:431px;width:1px;height:15px"></div>
<div class="ln" style="left:293px;top:431px;width:2px;height:2px"></div>
</div></body></html>
